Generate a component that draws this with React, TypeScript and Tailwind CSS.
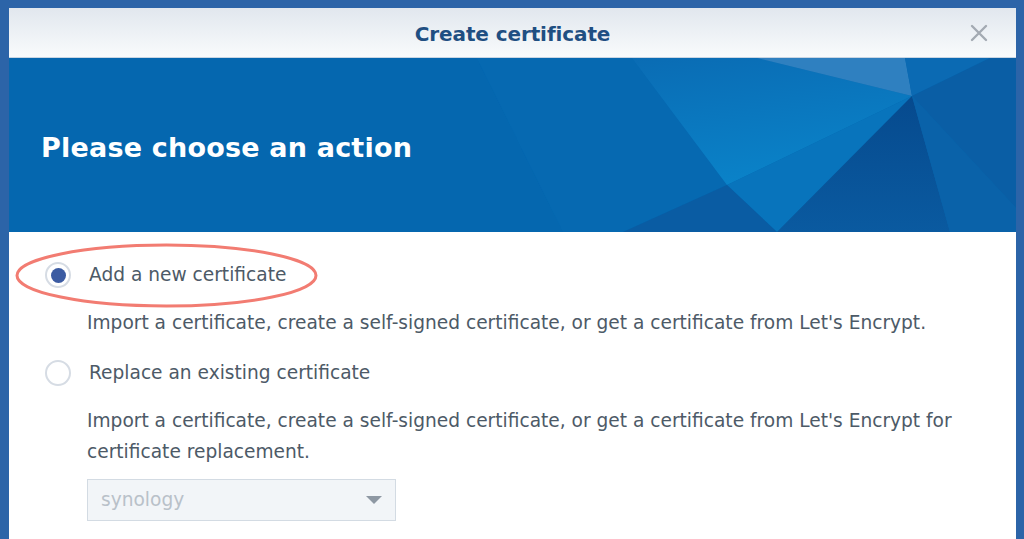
import React from 'react';

const Facets = () => (
  <svg className="absolute inset-0 h-full w-full" viewBox="0 0 1007 174" preserveAspectRatio="none">
    <defs>
      <linearGradient id="lite" x1="0" y1="0" x2="0.3" y2="1">
        <stop offset="0" stopColor="#0a6cb4" />
        <stop offset="1" stopColor="#0a82c8" />
      </linearGradient>
      <linearGradient id="dark" x1="0" y1="0" x2="0" y2="1">
        <stop offset="0" stopColor="#064a8e" />
        <stop offset="1" stopColor="#0a5aa0" />
      </linearGradient>
    </defs>
    <polygon points="0,0 468,0 554,174 0,174" fill="#0567af" />
    <polygon points="468,0 623,0 718,127 614,174 554,174" fill="#0669b1" />
    <polygon points="623,0 748,0 903,38 718,127" fill="url(#lite)" />
    <polygon points="748,0 896,0 903,38" fill="#2f80c0" />
    <polygon points="896,0 981,0 903,38" fill="#0b6ab3" />
    <polygon points="981,0 1007,0 1007,150 903,38" fill="#0a5ea5" />
    <polygon points="903,38 718,127 768,174" fill="#0874bc" />
    <polygon points="718,127 614,174 768,174" fill="#0a5ca3" />
    <polygon points="903,38 768,174 941,174" fill="url(#dark)" />
    <polygon points="903,38 941,174 1007,174 1007,150" fill="#0a62a9" />
  </svg>
);

const Radio = ({ checked }: { checked?: boolean }) => (
  <span className="flex size-[26px] shrink-0 items-center justify-center rounded-full border-2 border-[#d6dce4] bg-white">
    {checked && <span className="size-[15px] rounded-full bg-[#3b5ba2]" />}
  </span>
);

export default function App() {
  return (
    <div className="h-[539px] w-[1024px] overflow-hidden bg-[#2c64a8] pl-[9px] pt-[8px]" style={{ fontFamily: '"DejaVu Sans", Verdana, sans-serif' }}>
      <div className="relative h-[600px] w-[1007px] bg-white">
        {/* header */}
        <div className="relative flex h-[50px] items-center justify-center border-b border-[#c9d6e3] bg-gradient-to-b from-[#e1e7ee] to-[#f9fbfc] pt-[3px]">
          <h1 className="text-[20px] font-bold tracking-[-0.1px] text-[#1f4f82]">Create certificate</h1>
          <svg className="absolute right-[28px] top-[16px]" width="18" height="18" viewBox="0 0 18 18">
            <path d="M2 2L16 16M16 2L2 16" stroke="#a3aab2" strokeWidth="2.4" strokeLinecap="round" />
          </svg>
        </div>

        {/* banner */}
        <div className="relative flex h-[174px] items-center overflow-hidden bg-[#0468b0] pl-[32px]">
          <Facets />
          <h2 className="relative pt-[6px] text-[27px] font-bold tracking-[0.2px] text-white">Please choose an action</h2>
        </div>

        {/* body */}
        <div className="flex flex-col pl-[36px] pr-[24px] pt-[25px] text-[18.6px] text-[#4d5a67]">
          <label className="flex h-[36px] items-center gap-[18px]">
            <Radio checked />
            <span>Add a new certificate</span>
          </label>
          <p className="mt-[14px] pl-[42px] leading-[31px]">
            Import a certificate, create a self-signed certificate, or get a certificate from Let's Encrypt.
          </p>
          <label className="mt-[17px] flex h-[36px] items-center gap-[18px]">
            <Radio />
            <span>Replace an existing certificate</span>
          </label>
          <p className="mt-[14px] pl-[42px] leading-[31px]">
            Import a certificate, create a self-signed certificate, or get a certificate from Let's Encrypt for certificate replacement.
          </p>
          <div className="ml-[42px] mt-[12px] flex h-[42px] w-[309px] items-center justify-between border border-[#d3dbe3] bg-[#f2f5f8] pl-[13px] pr-[13px]">
            <span className="text-[#b9c1c9]">synology</span>
            <svg width="16" height="8" viewBox="0 0 16 8">
              <polygon points="0,0 16,0 8,8" fill="#8e98a3" />
            </svg>
          </div>
        </div>

        {/* annotation */}
        <svg className="pointer-events-none absolute left-0 top-0" width="1007" height="400">
          <ellipse cx="157.5" cy="267.5" rx="149.5" ry="30.5" fill="none" stroke="#f27c72" strokeWidth="3" />
        </svg>
      </div>
    </div>
  );
}
